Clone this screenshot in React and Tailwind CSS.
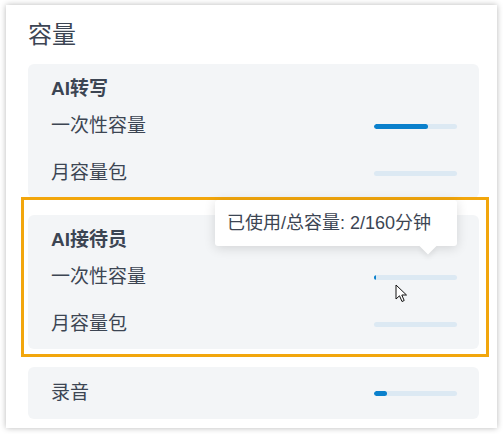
import React from "react";

const font = { fontFamily: '"Liberation Sans", "Noto Sans CJK SC", sans-serif' };

function Bar({ pct }) {
  return (
    <div className="w-[83px] h-[5px] rounded-full bg-[#dce9f3] overflow-hidden">
      <div className="h-full rounded-full bg-[#0a80cc]" style={{ width: pct + "%" }} />
    </div>
  );
}

function Row({ label, pct, className = "" }) {
  return (
    <div className={"h-[24px] flex items-center justify-between " + className}>
      <span className="text-[19px] text-[#3c4553]">{label}</span>
      <Bar pct={pct} />
    </div>
  );
}

function Card({ title, rows, children }) {
  return (
    <div className="relative bg-[#f3f5f7] rounded-md pl-[23px] pr-[22px] pb-[13px]">
      <div className="h-[50px] flex items-center text-[19px] font-bold text-[#3c4553]">{title}</div>
      <Row label={rows[0][0]} pct={rows[0][1]} />
      <Row label={rows[1][0]} pct={rows[1][1]} className="mt-[23px]" />
      {children}
    </div>
  );
}

export default function App() {
  return (
    <div className="w-[503px] h-[434px] bg-white pt-[5px] pl-[6px]" style={font}>
      <div className="w-[491px] h-[423px] bg-white shadow-[0_0_6px_rgba(0,0,0,0.28)] pl-[22px] pr-[18px]">
        <div className="h-[58px] flex items-center pt-[1px] text-[24px] text-[#3c4553]">容量</div>
        <div className="mt-[1px] flex flex-col gap-[17px]">
          <Card title="AI转写" rows={[["一次性容量", 65], ["月容量包", 0]]} />
          <Card title="AI接待员" rows={[["一次性容量", 2], ["月容量包", 0]]}>
            {/* highlight frame */}
            <div className="absolute -left-[7px] -top-[18px] w-[468px] h-[160px] border-[3px] border-[#f2a60c] pointer-events-none" />
            {/* tooltip */}
            <div className="absolute left-[187px] -top-[15px] w-[242px] h-[46px] bg-white rounded-[3px] shadow-[0_2px_12px_rgba(0,0,0,0.14)] flex items-center pl-[12px] text-[18px] text-[#3c4553] whitespace-nowrap">
              已使用/总容量: 2/160分钟
              <div className="absolute left-[207px] -bottom-[6px] w-[12px] h-[12px] bg-white rotate-45 shadow-[3px_3px_5px_rgba(0,0,0,0.06)]" />
            </div>
            {/* cursor */}
            <svg className="absolute left-[367px] top-[69px]" width="14" height="20" viewBox="0 0 14 20">
              <path d="M1 1 L1 15 L4.5 11.8 L7 17.5 L9.2 16.5 L6.8 11 L11.5 11 Z" fill="white" stroke="#111" strokeWidth="1" strokeLinejoin="round" />
            </svg>
          </Card>
          <div className="h-[52px] bg-[#f3f5f7] rounded-md pl-[23px] pr-[22px] flex items-center justify-between mt-[1px]">
            <span className="text-[19px] text-[#3c4553]">录音</span>
            <Bar pct={16} />
          </div>
        </div>
      </div>
    </div>
  );
}
